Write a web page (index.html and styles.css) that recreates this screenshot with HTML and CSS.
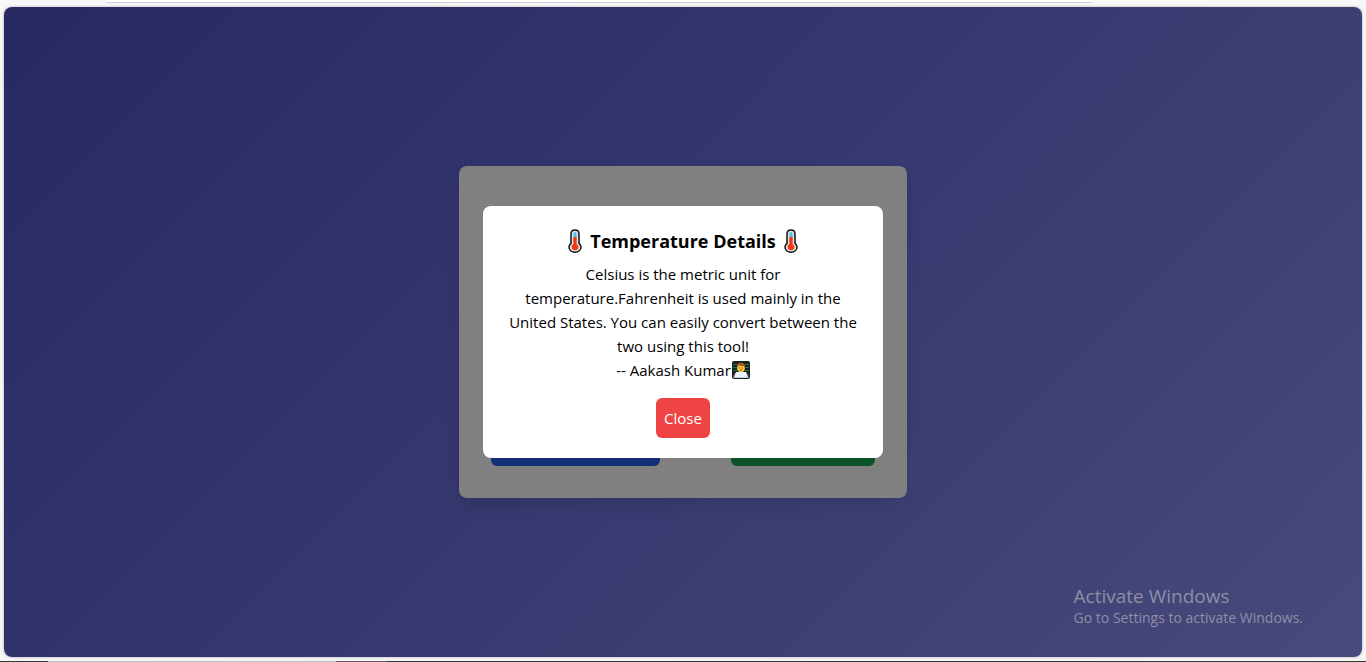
FILE: index.html
```html
<!DOCTYPE html>
<html lang="en">
<head>
<meta charset="utf-8">
<title>Temperature Converter</title>
<link rel="stylesheet" href="styles.css">
</head>
<body>
<svg class="defs" aria-hidden="true">
  <symbol id="thermometer" viewBox="0 0 14 24">
    <path d="M7 1C4.300 1 3 3 3 5v9.300C1.600 15.400 1 16.600 1 18c0 3 2.600 5.200 6 5.200s6-2.200 6-5.200c0-1.400-.6-2.600-2-3.700V5C11 3 9.700 1 7 1z" fill="#e4e4e4" stroke="#111" stroke-width="1.500"/>
    <path d="M5.300 8V5c0-1.300.7-2 1.700-2s1.700.7 1.700 2v3z" fill="#45c8ef"/>
    <path d="M5.300 8h3.400v7.300c1.100.5 1.800 1.500 1.800 2.700 0 1.900-1.500 3.200-3.500 3.200S3.500 19.900 3.500 18c0-1.200.7-2.200 1.800-2.700z" fill="#f03a17"/>
  </symbol>
</svg>
<div class="chrome"><div class="address"></div></div>
<main class="page">
  <section class="card">
    <div class="actions">
      <button class="action blue" aria-label="Convert"></button>
      <button class="action green" aria-label="Details"></button>
    </div>
    <div class="overlay">
      <div class="modal" role="dialog" aria-labelledby="title">
        <h2 class="title" id="title">
          <svg class="thermo" aria-hidden="true"><use href="#thermometer"/></svg>
          <span>Temperature Details</span>
          <svg class="thermo" aria-hidden="true"><use href="#thermometer"/></svg>
        </h2>
        <p class="text">Celsius is the metric unit for<br>temperature.Fahrenheit is used mainly in the<br>United States. You can easily convert between the<br>two using this tool!</p>
        <p class="text author">-- Aakash Kumar<svg class="coder" viewBox="0 0 18 18" aria-hidden="true">
          <rect width="18" height="18" rx="2" fill="#17221b"/>
          <path d="M1 3.500h4M13 3.500h4M1 6.500h4M13 6.500h4M1 9.500h4M13 9.500h4" stroke="#2c7046"/>
          <path d="M1 17c.2-3.500 1.500-5.500 4-5.500h8c2.500 0 3.800 2 4 5.500z" fill="#8157a9"/>
          <path d="M7 9h4v3H7z" fill="#e99a1c"/>
          <circle cx="9" cy="7" r="3.900" fill="#ffc83d"/>
          <path d="M5 7C4.500 3.500 6 1.700 9 1.700S13.500 3.500 13 7l-1-2C9.500 5.500 7.500 4.500 6.500 4.500z" fill="#a45b22"/>
          <path d="M7 7h1M10 7h1M8 9h2" stroke="#69401d"/>
          <path d="M4 11h10l2 6H2z" fill="#e9f4fc"/>
          <path d="M2 16.500h14" stroke="#bfd3df"/>
        </svg></p>
        <button class="close">Close</button>
      </div>
    </div>
  </section>
  <aside class="notice">
    <p class="notice-title">Activate Windows</p>
    <p class="notice-text">Go to Settings to activate Windows.</p>
  </aside>
</main>
<div class="taskbar"></div>
</body>
</html>
```
FILE: styles.css
```css
* { box-sizing: border-box; }
body {
  margin: 0;
  height: 100vh;
  display: flex;
  flex-direction: column;
  background: #f7f7f7;
  font-family: "Segoe UI", "Open Sans", "Noto Sans", sans-serif;
  font-size: 15px;
  line-height: 24px;
  color: #000;
  overflow: hidden;
}
h2, p { margin: 0; }
.defs { position: absolute; width: 0; height: 0; }
.chrome { height: 7px; flex: none; padding: 0 273px 0 105px; }
.address {
  height: 3px;
  border-bottom: 1px solid #ccc;
  border-radius: 0 0 12px 12px;
  background: #fff;
}
.page {
  position: relative;
  flex: 1;
  margin: 0 4px 4px;
  border-radius: 8px;
  background: linear-gradient(135deg, #282963, #36386f 50%, #48497c);
  box-shadow: 0 0 3px rgba(0, 0, 0, .3);
  display: flex;
  align-items: center;
  justify-content: center;
}
.card {
  position: relative;
  width: 100%;
  max-width: 448px;
  min-height: 332px;
  padding: 32px;
  border-radius: 8px;
  background: #808080;
  box-shadow: 0 8px 16px rgba(0, 0, 0, .08);
  display: flex;
  flex-direction: column;
  justify-content: flex-end;
}
.actions { display: flex; justify-content: space-between; }
.action { height: 40px; border: 0; border-radius: 6px; }
.blue { width: 169px; background: #122f76; }
.green { width: 144px; background: #0b5227; }
.overlay {
  position: absolute;
  inset: 0;
  display: flex;
  align-items: center;
  justify-content: center;
}
.modal {
  width: 400px;
  padding: 20px;
  border-radius: 8px;
  background: #fff;
  text-align: center;
}
.title {
  display: flex;
  align-items: center;
  justify-content: center;
  gap: 8px;
  padding-top: 2px;
  margin-bottom: 8px;
  font-size: 18px;
  line-height: 26px;
  font-weight: 700;
}
.thermo { width: 14px; height: 24px; }
.author { display: flex; align-items: center; justify-content: center; gap: 1px; }
.coder { width: 18px; height: 18px; }
.close {
  margin-top: 16px;
  padding: 8px;
  border: 0;
  border-radius: 6px;
  background: #ef4444;
  color: #fff;
  font: inherit;
}
.notice {
  position: absolute;
  right: 59px;
  bottom: 29px;
  color: #8e8fa5;
}
.notice-title { font-size: 19px; line-height: 24px; }
.notice-text { font-size: 14px; line-height: 20px; }
.taskbar {
  flex: none;
  height: 1px;
  background: linear-gradient(90deg, #3a3430 48px, #bbb 48px, #bbb 336px, #665c54 336px, #665c54 387px, #3a3430 387px);
}
```
